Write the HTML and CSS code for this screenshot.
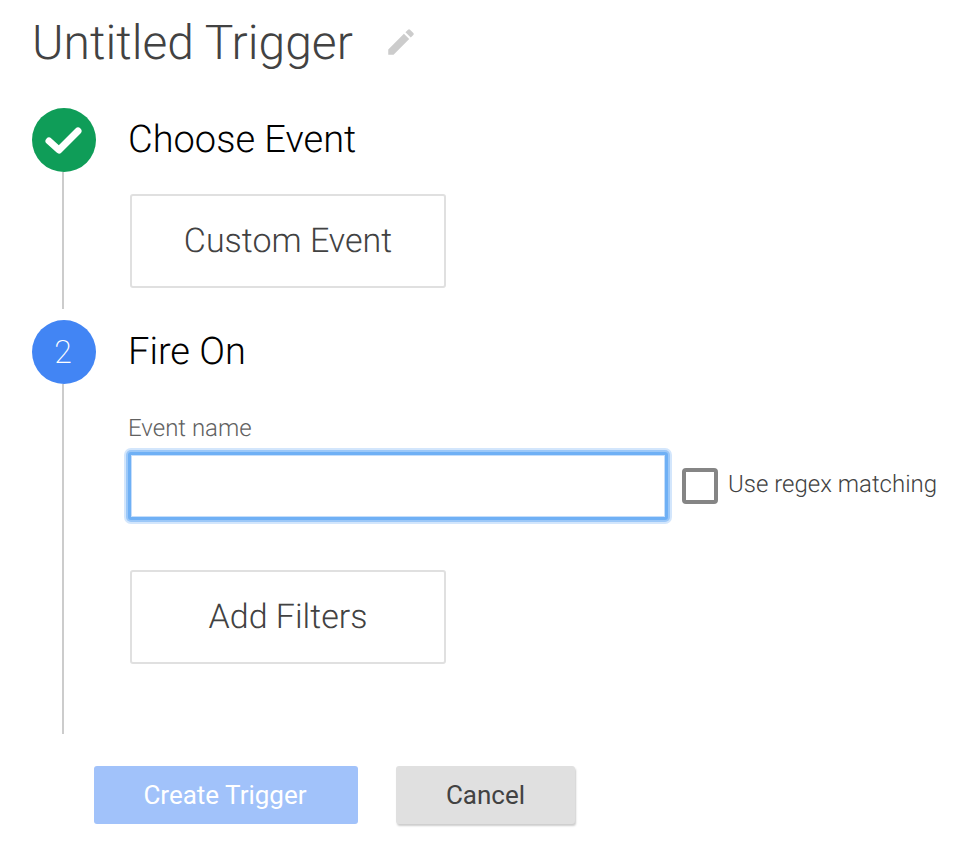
FILE: index.html
```html
<!DOCTYPE html>
<html lang="en">
<head>
  <meta charset="UTF-8">
  <title>Untitled Trigger</title>
  <link rel="stylesheet" href="styles.css">
</head>
<body>
  <div class="title-row">
    <h1 class="title">Untitled Trigger</h1>
    <svg class="edit-icon" viewBox="0 0 24 24" width="34" height="34">
      <path d="M3 17.25V21h3.75L17.81 9.94l-3.75-3.75L3 17.25zM20.71 7.04a1 1 0 0 0 0-1.41l-2.34-2.34a1 1 0 0 0-1.41 0l-1.83 1.83 3.75 3.75 1.83-1.83z"/>
    </svg>
  </div>

  <div class="step step-first">
    <div class="rail">
      <div class="badge badge-done">
        <svg viewBox="0 0 64 64" width="64" height="64">
          <path d="M17 33l10 9 19-19" fill="none" stroke="#fff" stroke-width="7" stroke-linecap="round" stroke-linejoin="round"/>
        </svg>
      </div>
      <div class="rail-line"></div>
    </div>
    <div class="step-body">
      <h2 class="step-title">Choose Event</h2>
      <div class="card">Custom Event</div>
    </div>
  </div>

  <div class="step step-second">
    <div class="rail">
      <div class="badge badge-active">2</div>
      <div class="rail-line"></div>
    </div>
    <div class="step-body">
      <h2 class="step-title">Fire On</h2>
      <label class="field-label" for="eventName">Event name</label>
      <div class="field-row">
        <input id="eventName" class="field-input" type="text">
        <span class="checkbox"></span>
        <span class="checkbox-label">Use regex matching</span>
      </div>
      <div class="card card-filters">Add Filters</div>
    </div>
  </div>

  <div class="actions">
    <button class="btn btn-primary">Create Trigger</button>
    <button class="btn btn-cancel">Cancel</button>
  </div>
</body>
</html>
```

FILE: styles.css
```css
body {
  margin: 0;
  padding: 0 0 32px 32px;
  background: #fff;
  font-family: Roboto, sans-serif;
  text-rendering: geometricPrecision;
}
.title-row {
  display: flex;
  align-items: center;
  height: 84px;
  margin-bottom: 24px;
}
.title {
  margin: 0;
  font-size: 48px;
  font-weight: 300;
  color: #424242;
}
.edit-icon {
  margin-left: 31px;
  fill: #ccc;
}
.step {
  display: flex;
}
.step-first {
  height: 201px;
  margin-bottom: 11px;
}
.step-second {
  height: 414px;
}
.rail {
  width: 64px;
  display: flex;
  flex-direction: column;
  align-items: center;
  margin-right: 32px;
}
.badge {
  width: 64px;
  height: 64px;
  flex: none;
  border-radius: 50%;
  display: flex;
  align-items: center;
  justify-content: center;
  color: #fff;
  font-size: 32px;
  font-weight: 200;
}
.badge-done {
  background: #0f9d58;
}
.badge-active {
  padding-right: 2px;
  box-sizing: border-box;
  background: #4285f4;
}
.rail-line {
  flex: 1;
  width: 2px;
  margin-right: 2px;
  background: #ccc;
}
.step-title {
  margin: 0;
  height: 64px;
  line-height: 65px;
  font-size: 38px;
  font-weight: 300;
  color: #000;
}
.card {
  width: 312px;
  height: 90px;
  margin: 22px 0 0 2px;
  border: 2px solid #e0e0e0;
  border-radius: 3px;
  display: flex;
  align-items: center;
  justify-content: center;
  font-size: 34px;
  font-weight: 300;
  color: #424242;
}
.card-filters {
  margin-top: 50px;
}
.field-label {
  display: block;
  margin-top: 28px;
  height: 40px;
  line-height: 32px;
  font-size: 24px;
  font-weight: 300;
  color: #616161;
}
.field-row {
  display: flex;
  align-items: center;
}
.field-input {
  box-sizing: border-box;
  width: 540px;
  height: 68px;
  margin: 0;
  padding: 0;
  background: #fff;
  border: 3px solid #6fb0f5;
  border-radius: 3px;
  box-shadow: 0 0 0 2px #9cc8f8, 0 0 0 4px #d3e6fc, inset 0 0 0 1px #c5defb;
  outline: none;
}
.checkbox {
  box-sizing: border-box;
  width: 36px;
  height: 36px;
  margin-left: 14px;
  border: 4px solid #858585;
  border-radius: 4px;
}
.checkbox-label {
  margin-left: 10px;
  padding-bottom: 5px;
  font-size: 24px;
  font-weight: 300;
  color: #424242;
  white-space: nowrap;
}
.actions {
  display: flex;
  gap: 38px;
  margin: 32px 0 0 62px;
}
.btn {
  height: 58px;
  padding: 0;
  border: 0;
  border-radius: 3px;
  font-family: inherit;
  font-size: 26px;
}
.btn-primary {
  width: 264px;
  padding-right: 2px;
  background: #a1c2fa;
  color: #fff;
}
.btn-cancel {
  width: 179px;
  background: #e0e0e0;
  color: #424242;
  box-shadow: 1px 2px 2px rgba(0, 0, 0, 0.2);
}
```
